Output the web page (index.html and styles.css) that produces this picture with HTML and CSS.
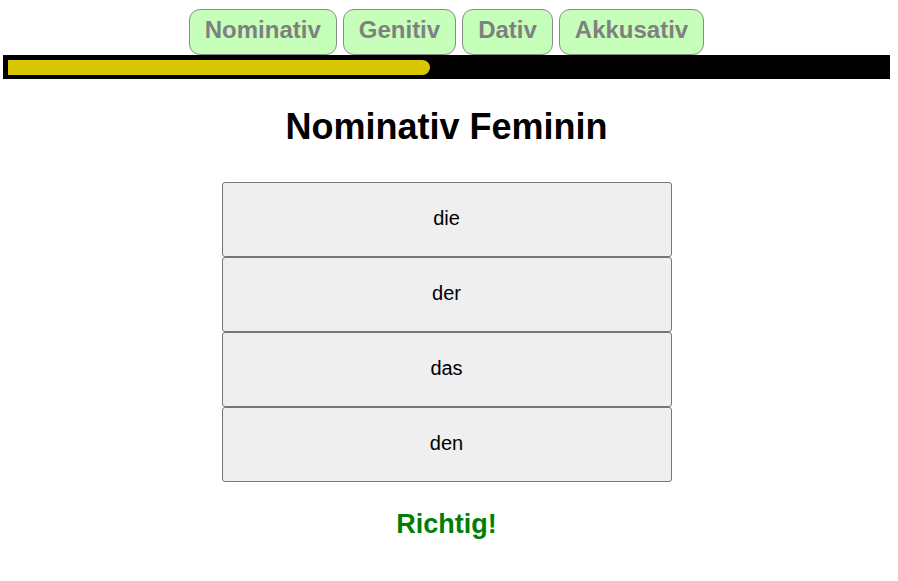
FILE: index.html
```html
<!DOCTYPE html>
<html>
<head>
<meta charset="utf-8">
<link rel="stylesheet" href="styles.css">
</head>
<body>
<div class="page">
  <nav class="tabs">
    <button class="tab">Nominativ</button>
    <button class="tab">Genitiv</button>
    <button class="tab">Dativ</button>
    <button class="tab">Akkusativ</button>
  </nav>
  <div class="progress"><div class="progress-fill" style="width: 422px"></div></div>
  <h1 class="title">Nominativ Feminin</h1>
  <div class="answers">
    <button class="answer">die</button>
    <button class="answer">der</button>
    <button class="answer">das</button>
    <button class="answer">den</button>
  </div>
  <p class="result">Richtig!</p>
</div>
</body>
</html>
```
FILE: styles.css
```css
html, body {
  margin: 0;
  padding: 0;
  background: #ffffff;
}
.page {
  width: 893px;
  font-family: "Liberation Sans", Arial, sans-serif;
  display: flex;
  flex-direction: column;
  align-items: center;
}
.tabs {
  display: flex;
  gap: 6px;
  margin-top: 9px;
}
.tab {
  height: 46px;
  padding: 0 15px 4px;
  background: #c6ffba;
  border: 1px solid #8a8a8a;
  border-radius: 11px;
  font-family: "Liberation Sans", Arial, sans-serif;
  font-weight: bold;
  font-size: 24px;
  color: #808080;
}
.progress {
  align-self: stretch;
  margin: 0 3px;
  background: #000;
  padding: 5px 5px 4px;
  box-sizing: border-box;
  height: 24px;
}
.progress-fill {
  height: 15px;
  background: #d8c600;
  border-radius: 0 8px 8px 0;
}
.title {
  margin: 26px 0 0;
  font-size: 36px;
  font-weight: bold;
  line-height: 44px;
}
.answers {
  display: flex;
  flex-direction: column;
  margin-top: 33px;
}
.answer {
  width: 450px;
  height: 75px;
  padding-bottom: 3px;
  background: #efefef;
  border: 1px solid #767676;
  border-radius: 3px;
  font-family: "Liberation Sans", Arial, sans-serif;
  font-size: 20px;
  color: #000;
}
.result {
  margin: 25px 0 0;
  font-size: 27px;
  font-weight: bold;
  color: #008000;
  line-height: 34px;
}
```
